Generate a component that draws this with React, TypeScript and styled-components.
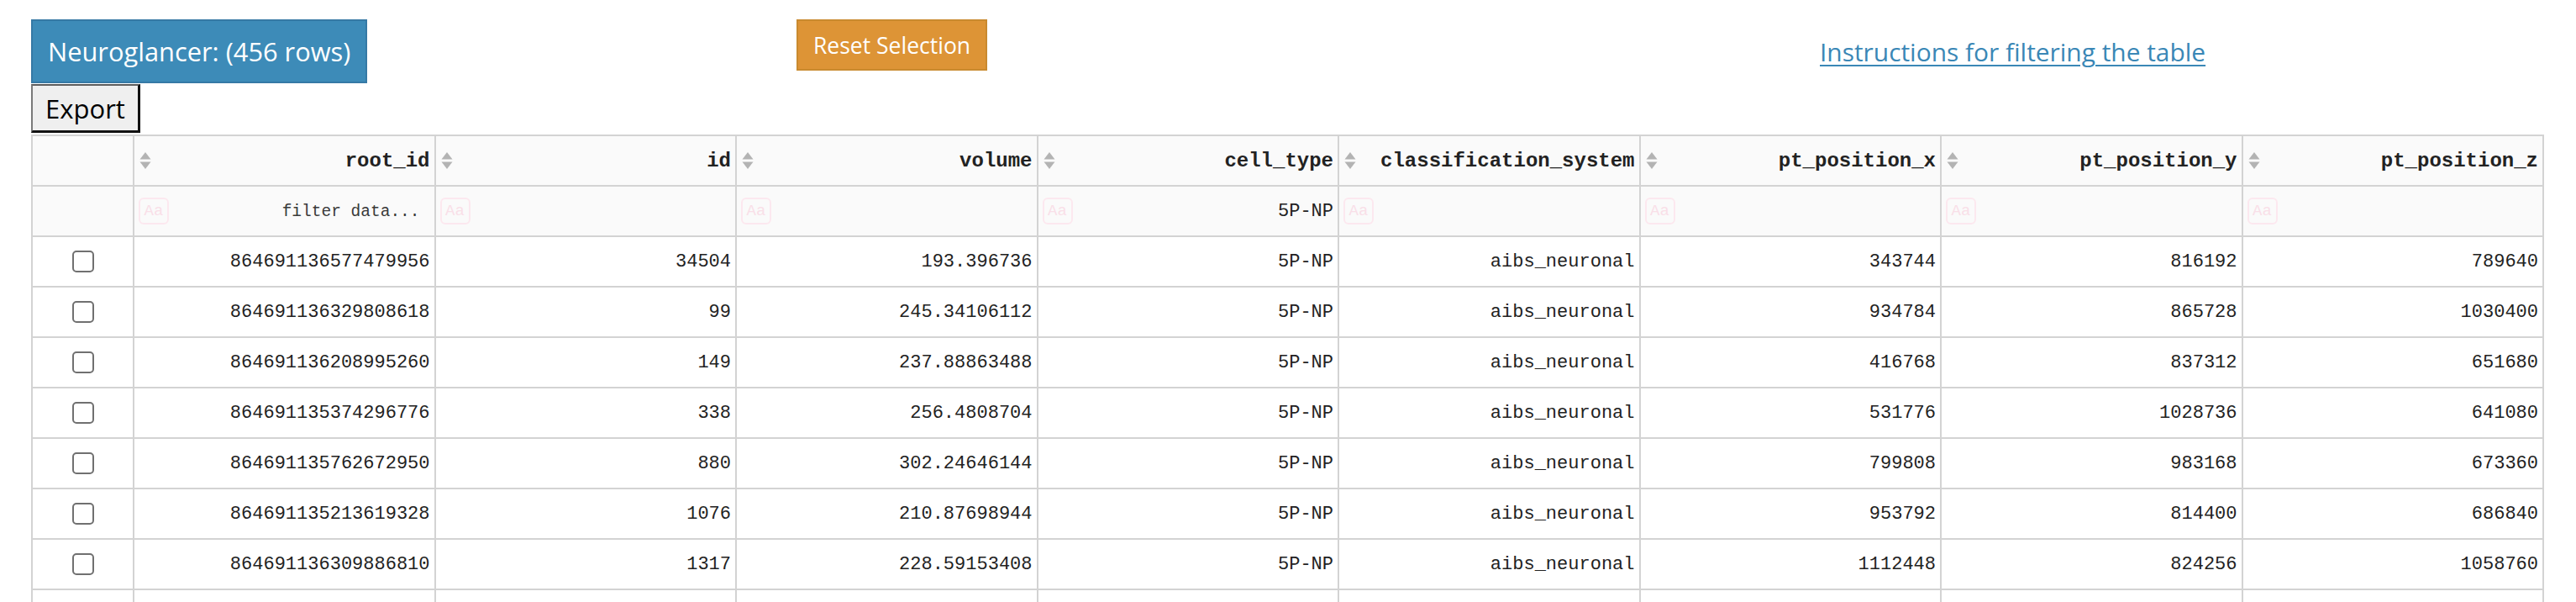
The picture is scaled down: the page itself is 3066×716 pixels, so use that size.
import styled, { createGlobalStyle } from 'styled-components';

const GlobalStyle = createGlobalStyle`
  html, body {
    margin: 0;
    padding: 0;
    background: #ffffff;
  }
  body {
    font-family: "Open Sans", "Liberation Sans", sans-serif;
    overflow: hidden;
  }
`;

const Page = styled.div`
  padding: 23px 38px 0 37px;
`;

const TopBar = styled.div`
  display: grid;
  grid-template-columns: 911px 1218px 1fr;
  align-items: start;
`;

const LeftStack = styled.div`
  display: flex;
  flex-direction: column;
  align-items: flex-start;
  gap: 1px;
`;

const NgButton = styled.button`
  box-sizing: border-box;
  height: 76px;
  padding: 0 18px;
  background: #3d8bb8;
  border: 2px solid #3679a5;
  color: #ffffff;
  font-family: "Open Sans", sans-serif;
  font-size: 30.8px;
  cursor: pointer;
`;

const ExportButton = styled.button`
  box-sizing: border-box;
  height: 58px;
  width: 130px;
  padding: 0;
  background: #efefef;
  border-style: solid;
  border-width: 2px 3px 3px 2px;
  border-color: #5c5c5c #111111 #111111 #7a7a7a;
  color: #000000;
  font-family: "Open Sans", sans-serif;
  font-size: 31px;
`;

const ResetButton = styled.button`
  box-sizing: border-box;
  height: 61px;
  padding: 0 18px;
  background: #dd9436;
  border: 2px solid #c98a2f;
  color: #ffffff;
  font-family: "Open Sans", sans-serif;
  font-size: 26.5px;
`;

const HelpLink = styled.a`
  display: inline-block;
  margin-top: 18px;
  color: #3a87b6;
  font-family: "Open Sans", sans-serif;
  font-size: 29.9px;
  text-decoration: underline;
  text-decoration-thickness: 2px;
  text-underline-offset: 4px;
`;

const Table = styled.table`
  margin-top: 2px;
  width: 100%;
  table-layout: fixed;
  border-collapse: collapse;
  font-family: "Liberation Mono", "Courier New", monospace;
  color: #222222;
`;

const Row = styled.tr<{ $shaded?: boolean }>`
  height: 60px;
  background: ${(p) => (p.$shaded ? '#fafafa' : '#ffffff')};
`;

const Cell = styled.td`
  border: 2px solid #d3d3d3;
  padding: 0 5px 0 5px;
  text-align: right;
  font-size: 22px;
  white-space: nowrap;
  overflow: hidden;
`;

const CheckCell = styled(Cell)`
  text-align: center;
  padding: 0;
`;

const HeadInner = styled.div`
  display: flex;
  align-items: center;
  justify-content: space-between;
  font-size: 24px;
  font-weight: bold;
  padding-left: 1px;
`;

const FilterInner = styled.div`
  display: flex;
  align-items: center;
  gap: 6px;
`;

const CaseToggle = styled.span`
  box-sizing: border-box;
  flex: none;
  width: 36px;
  height: 32px;
  border: 2px solid #fce8ef;
  border-radius: 6px;
  display: flex;
  align-items: center;
  justify-content: center;
  color: #f9dfe8;
  font-size: 19px;
  font-family: "Liberation Mono", monospace;
`;

const FilterInput = styled.input<{ $padRight?: number }>`
  flex: 1;
  min-width: 0;
  border: none;
  background: transparent;
  text-align: right;
  font-family: "Liberation Mono", monospace;
  font-size: 22px;
  color: #222222;
  padding: 0 ${(p) => p.$padRight ?? 0}px 0 0;
  outline: none;
  &::placeholder {
    color: #3a3a3a;
    font-size: 19.5px;
  }
`;

const Box = styled.span`
  display: inline-block;
  box-sizing: border-box;
  width: 26px;
  height: 26px;
  border: 2.5px solid #707070;
  border-radius: 5px;
  vertical-align: middle;
`;

function SortIcon() {
  return (
    <svg width="14" height="20" viewBox="0 0 14 20">
      <path d="M7 0 L13.5 8.5 L0.5 8.5 Z" fill="#b3b3b3" />
      <path d="M7 20 L13.5 11.5 L0.5 11.5 Z" fill="#b3b3b3" />
    </svg>
  );
}

const columns = [
  'root_id',
  'id',
  'volume',
  'cell_type',
  'classification_system',
  'pt_position_x',
  'pt_position_y',
  'pt_position_z',
];

const rows: string[][] = [
  ['864691136577479956', '34504', '193.396736', '5P-NP', 'aibs_neuronal', '343744', '816192', '789640'],
  ['864691136329808618', '99', '245.34106112', '5P-NP', 'aibs_neuronal', '934784', '865728', '1030400'],
  ['864691136208995260', '149', '237.88863488', '5P-NP', 'aibs_neuronal', '416768', '837312', '651680'],
  ['864691135374296776', '338', '256.4808704', '5P-NP', 'aibs_neuronal', '531776', '1028736', '641080'],
  ['864691135762672950', '880', '302.24646144', '5P-NP', 'aibs_neuronal', '799808', '983168', '673360'],
  ['864691135213619328', '1076', '210.87698944', '5P-NP', 'aibs_neuronal', '953792', '814400', '686840'],
  ['864691136309886810', '1317', '228.59153408', '5P-NP', 'aibs_neuronal', '1112448', '824256', '1058760'],
  ['864691135848859998', '1574', '219.5302656', '5P-NP', 'aibs_neuronal', '623616', '841984', '702720'],
];

export default function App() {
  return (
    <Page>
      <GlobalStyle />
      <TopBar>
        <LeftStack>
          <NgButton>Neuroglancer: (456 rows)</NgButton>
          <ExportButton>Export</ExportButton>
        </LeftStack>
        <div>
          <ResetButton>Reset Selection</ResetButton>
        </div>
        <div>
          <HelpLink href="#">Instructions for filtering the table</HelpLink>
        </div>
      </TopBar>
      <Table>
        <colgroup>
          <col style={{ width: 121 }} />
          {columns.map((c) => (
            <col key={c} />
          ))}
        </colgroup>
        <thead>
          <Row $shaded>
            <CheckCell as="th" />
            {columns.map((c) => (
              <Cell as="th" key={c}>
                <HeadInner>
                  <SortIcon />
                  <span>{c}</span>
                </HeadInner>
              </Cell>
            ))}
          </Row>
          <Row $shaded>
            <CheckCell />
            {columns.map((c, i) => (
              <Cell key={c}>
                <FilterInner>
                  <CaseToggle>Aa</CaseToggle>
                  <FilterInput
                    readOnly
                    placeholder={i === 0 ? 'filter data...' : ''}
                    defaultValue={c === 'cell_type' ? '5P-NP' : ''}
                    $padRight={i === 0 ? 12 : 0}
                  />
                </FilterInner>
              </Cell>
            ))}
          </Row>
        </thead>
        <tbody>
          {rows.map((r) => (
            <Row key={r[0]}>
              <CheckCell>
                <Box />
              </CheckCell>
              {r.map((v, i) => (
                <Cell key={i}>{v}</Cell>
              ))}
            </Row>
          ))}
        </tbody>
      </Table>
    </Page>
  );
}
